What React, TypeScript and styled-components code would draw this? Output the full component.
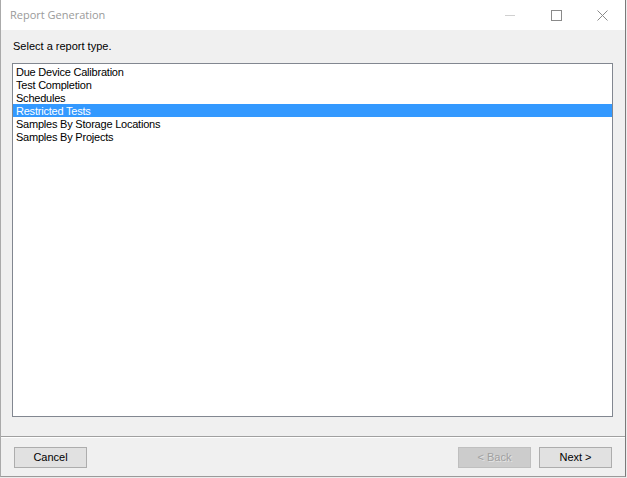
import React, { useState } from "react";
import styled, { createGlobalStyle } from "styled-components";

const Global = createGlobalStyle`
  html, body { margin: 0; padding: 0; background: #ececec; }
  * { box-sizing: border-box; }
`;

const Window = styled.div`
  width: 626px;
  height: 477px;
  display: flex;
  flex-direction: column;
  background: #f0f0f0;
  border-left: 1px solid #aaaaaa;
  border-right: 1px solid #7a7a7a;
  border-bottom: 1px solid #9a9a9a;
  font-family: "Liberation Sans", Arial, sans-serif;
  font-size: 11px;
  color: #000;
`;

const TitleBar = styled.div`
  height: 30px;
  flex: none;
  background: #ffffff;
  display: flex;
  align-items: center;
  padding-left: 9px;
`;

const Title = styled.div`
  flex: 1;
  font-family: "Open Sans", "Noto Sans", sans-serif;
  font-size: 11px;
  color: #9a9a9a;
  margin-top: -1px;
`;

const Controls = styled.div`
  display: flex;
  height: 30px;
`;

const ControlButton = styled.div`
  width: 46px;
  height: 30px;
  display: flex;
  align-items: center;
  justify-content: center;
`;

const Content = styled.div`
  flex: 1;
  display: flex;
  flex-direction: column;
  padding: 10px 12px 19px 11px;
`;

const Label = styled.div`
  height: 13px;
  line-height: 13px;
  padding-left: 1px;
  margin-bottom: 10px;
`;

const ListBox = styled.div`
  height: 354px;
  background: #ffffff;
  border: 1px solid #828790;
  padding-top: 1px;
`;

const Item = styled.div<{ $selected?: boolean }>`
  height: 13px;
  line-height: 13px;
  padding: 1px 0 0 3px;
  white-space: nowrap;
  letter-spacing: -0.22px;
  cursor: default;
  background: ${(p) => (p.$selected ? "#3399ff" : "transparent")};
  color: ${(p) => (p.$selected ? "#ffffff" : "#000000")};
`;

const Footer = styled.div`
  flex: none;
  border-top: 1px solid #a0a0a0;
  box-shadow: inset 0 1px 0 #ffffff;
  padding: 10px 13px 8px 13px;
  display: flex;
  align-items: center;
`;

const Spacer = styled.div`
  flex: 1;
`;

const Button = styled.button<{ $disabled?: boolean }>`
  width: 73px;
  height: 21px;
  padding: 0;
  margin: 0;
  font-family: "Liberation Sans", Arial, sans-serif;
  font-size: 11px;
  line-height: 19px;
  border: 1px solid ${(p) => (p.$disabled ? "#bfbfbf" : "#adadad")};
  background: ${(p) => (p.$disabled ? "#cccccc" : "#e1e1e1")};
  color: ${(p) => (p.$disabled ? "#a0a0a0" : "#000000")};
  text-shadow: ${(p) => (p.$disabled ? "1px 1px 0 #e4e4e4" : "none")};
  & + & {
    margin-left: 8px;
  }
`;

const items = [
  "Due Device Calibration",
  "Test Completion",
  "Schedules",
  "Restricted Tests",
  "Samples By Storage Locations",
  "Samples By Projects",
];

export default function App() {
  const [selected, setSelected] = useState(3);
  return (
    <>
      <Global />
      <Window>
        <TitleBar>
          <Title>Report Generation</Title>
          <Controls>
            <ControlButton>
              <svg width="10" height="10" viewBox="0 0 10 10">
                <line x1="0" y1="5.5" x2="10" y2="5.5" stroke="#d0d0d0" strokeWidth="1" />
              </svg>
            </ControlButton>
            <ControlButton>
              <svg width="11" height="11" viewBox="0 0 11 11">
                <rect x="0.5" y="0.5" width="10" height="10" fill="none" stroke="#8a8a8a" strokeWidth="1" />
              </svg>
            </ControlButton>
            <ControlButton>
              <svg width="11" height="11" viewBox="0 0 11 11">
                <path d="M0.5 0.5 L10.5 10.5 M10.5 0.5 L0.5 10.5" stroke="#8a8a8a" strokeWidth="1" fill="none" />
              </svg>
            </ControlButton>
          </Controls>
        </TitleBar>
        <Content>
          <Label>Select a report type.</Label>
          <ListBox>
            {items.map((it, i) => (
              <Item key={it} $selected={i === selected} onClick={() => setSelected(i)}>
                {it}
              </Item>
            ))}
          </ListBox>
        </Content>
        <Footer>
          <Button>Cancel</Button>
          <Spacer />
          <Button $disabled disabled>&lt; Back</Button>
          <Button>Next &gt;</Button>
        </Footer>
      </Window>
    </>
  );
}
